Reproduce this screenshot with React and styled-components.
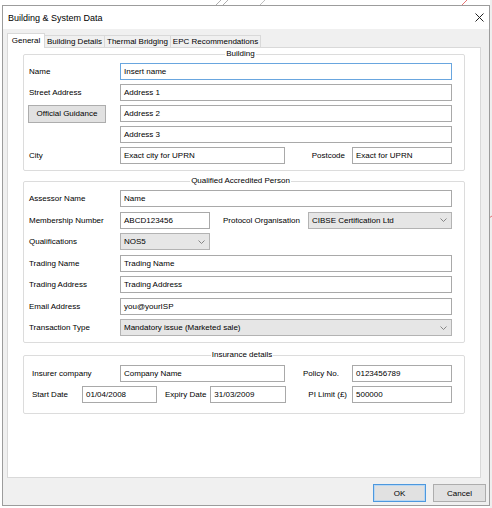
import React from "react";
import styled, { createGlobalStyle } from "styled-components";

const GlobalStyle = createGlobalStyle`
  html, body { margin: 0; padding: 0; background: #ffffff; }
  body {
    font-family: "Liberation Sans", Arial, sans-serif;
    font-size: 8px;
    color: #000;
  }
  * { box-sizing: border-box; }
`;

const Page = styled.div`
  position: relative;
  width: 492px;
  height: 508px;
  padding: 5px 0 0 2px;
  overflow: hidden;
`;

const Backdrop = styled.svg`
  position: absolute;
  left: 0;
  top: 0;
  width: 492px;
  height: 508px;
`;

const Window = styled.div`
  position: relative;
  width: 488px;
  height: 501px;
  border: 1px solid #9c9c9c;
  background: #f0f0f0;
  display: flex;
  flex-direction: column;
`;

const TitleBar = styled.div`
  height: 23px;
  flex: none;
  background: #ffffff;
  display: flex;
  align-items: center;
  justify-content: space-between;
  padding: 0 5px;
  font-size: 9px;
`;

const Body = styled.div`
  flex: 1;
  display: flex;
  flex-direction: column;
  padding: 4px 3px 3px 4px;
`;

const TabRow = styled.div`
  position: relative;
  z-index: 1;
  display: flex;
  align-items: flex-end;
  height: 15px;
  margin-bottom: -1px;
`;

const Tab = styled.div`
  width: ${(p) => p.$w}px;
  height: ${(p) => (p.$active ? 15 : 13)}px;
  margin-left: ${(p) => (p.$first ? 0 : -1)}px;
  border: 1px solid #d9d9d9;
  border-bottom: ${(p) => (p.$active ? "none" : "1px solid #d9d9d9")};
  background: ${(p) => (p.$active ? "#ffffff" : "#f0f0f0")};
  display: flex;
  align-items: center;
  justify-content: center;
  white-space: nowrap;
  padding-bottom: ${(p) => (p.$active ? 2 : 0)}px;
  position: relative;
  z-index: ${(p) => (p.$active ? 2 : 1)};
`;

const Panel = styled.div`
  width: 474px;
  height: 431px;
  flex: none;
  background: #ffffff;
  border: 1px solid #d9d9d9;
  padding: 0 15px;
`;

const Group = styled.fieldset`
  margin: ${(p) => p.$mt}px 0 0 0;
  min-width: 0;
  border: 1px solid #dcdcdc;
  border-radius: 2px;
  padding: ${(p) => p.$pt}px 12px ${(p) => p.$pb}px ${(p) => p.$pl}px;
  display: flex;
  flex-direction: column;
  gap: ${(p) => p.$gap}px;
`;

const Legend = styled.legend`
  margin: 0 auto;
  padding: 0 1px;
  font-size: 8px;
  line-height: 10px;
`;

const Row = styled.div`
  display: flex;
  align-items: center;
  height: 17px;
`;

const Label = styled.div`
  width: ${(p) => p.$w}px;
  flex: none;
  white-space: nowrap;
`;

const InlineLabel = styled.div`
  flex: none;
  white-space: nowrap;
  margin-left: ${(p) => p.$ml || 0}px;
  margin-right: ${(p) => p.$mr || 0}px;
`;

const Spacer = styled.div`
  flex: 1;
`;

const Field = styled.div`
  height: 17px;
  width: ${(p) => (p.$w ? `${p.$w}px` : "auto")};
  flex: ${(p) => (p.$w ? "none" : "1")};
  border: 1px solid ${(p) => (p.$focus ? "#69a6df" : "#a9a9a9")};
  background: #ffffff;
  display: flex;
  align-items: center;
  padding: 0 3px;
  white-space: nowrap;
  overflow: hidden;
`;

const Select = styled.div`
  height: 17px;
  width: ${(p) => (p.$w ? `${p.$w}px` : "auto")};
  flex: ${(p) => (p.$w ? "none" : "1")};
  border: 1px solid #b3b3b3;
  background: #e6e6e6;
  display: flex;
  align-items: center;
  justify-content: space-between;
  padding: 0 4px 0 3px;
  white-space: nowrap;
`;

const Chevron = () => (
  <svg width="7" height="4" viewBox="0 0 7 4">
    <polyline points="0.5,0.5 3.5,3.5 6.5,0.5" fill="none" stroke="#7a7a7a" strokeWidth="0.9" />
  </svg>
);

const GuidanceButton = styled.div`
  width: 78px;
  height: 18px;
  margin-left: -1px;
  margin-right: 14px;
  flex: none;
  background: #e1e1e1;
  border: 1px solid #adadad;
  display: flex;
  align-items: center;
  justify-content: center;
  white-space: nowrap;
`;

const Footer = styled.div`
  display: flex;
  justify-content: flex-end;
  gap: 7px;
  margin-top: 6px;
`;

const DialogButton = styled.div`
  width: 53px;
  height: 18px;
  background: #e1e1e1;
  border: 1px solid ${(p) => (p.$primary ? "#4d98de" : "#adadad")};
  box-shadow: ${(p) => (p.$primary ? "inset 0 0 0 1px #b9d7f2" : "none")};
  display: flex;
  align-items: center;
  justify-content: center;
`;

const CloseIcon = () => (
  <svg width="9" height="9" viewBox="0 0 9 9">
    <path d="M0.5 0.5 L8.5 8.5 M8.5 0.5 L0.5 8.5" stroke="#222" strokeWidth="1" fill="none" />
  </svg>
);

function TextRow({ label, value, focus, lw = 91 }) {
  return (
    <Row>
      <Label $w={lw}>{label}</Label>
      <Field $focus={focus}>{value}</Field>
    </Row>
  );
}

export default function App() {
  return (
    <>
      <GlobalStyle />
      <Page>
        <Backdrop viewBox="0 0 492 508">
          <line x1="216" y1="5" x2="221" y2="0" stroke="#9a9a9a" strokeWidth="0.8" />
          <line x1="223" y1="5" x2="228" y2="0" stroke="#9a9a9a" strokeWidth="0.8" />
          <line x1="260" y1="5" x2="265" y2="0" stroke="#b0b0b0" strokeWidth="0.8" />
          <line x1="462" y1="5" x2="467" y2="0" stroke="#e05050" strokeWidth="0.8" />
          <line x1="491" y1="0" x2="491" y2="508" stroke="#d6d6d6" strokeWidth="0.8" />
          <line x1="489" y1="218" x2="492" y2="216" stroke="#e05050" strokeWidth="0.8" />
        </Backdrop>
        <Window>
          <TitleBar>
            <span>Building &amp; System Data</span>
            <CloseIcon />
          </TitleBar>
          <Body>
            <TabRow>
              <Tab $w={38} $first $active>General</Tab>
              <Tab $w={61}>Building Details</Tab>
              <Tab $w={67}>Thermal Bridging</Tab>
              <Tab $w={91}>EPC Recommendations</Tab>
            </TabRow>
            <Panel>
              <Group $mt={1} $pt={4} $pb={6} $pl={5} $gap={4}>
                <Legend>Building</Legend>
                <TextRow label="Name" value="Insert name" focus />
                <TextRow label="Street Address" value="Address 1" />
                <Row>
                  <GuidanceButton>Official Guidance</GuidanceButton>
                  <Field>Address 2</Field>
                </Row>
                <TextRow label="" value="Address 3" />
                <Row>
                  <Label $w={91}>City</Label>
                  <Field $w={165}>Exact city for UPRN</Field>
                  <Spacer />
                  <InlineLabel $mr={7}>Postcode</InlineLabel>
                  <Field $w={100}>Exact for UPRN</Field>
                </Row>
              </Group>

              <Group $mt={5} $pt={4} $pb={6} $pl={5} $gap={4.5}>
                <Legend>Qualified Accredited Person</Legend>
                <TextRow label="Assessor Name" value="Name" />
                <Row>
                  <Label $w={91}>Membership Number</Label>
                  <Field $w={90}>ABCD123456</Field>
                  <InlineLabel $ml={13}>Protocol Organisation</InlineLabel>
                  <Spacer />
                  <Select $w={144}>
                    CIBSE Certification Ltd
                    <Chevron />
                  </Select>
                </Row>
                <Row>
                  <Label $w={91}>Qualifications</Label>
                  <Select $w={90}>
                    NOS5
                    <Chevron />
                  </Select>
                </Row>
                <TextRow label="Trading Name" value="Trading Name" />
                <TextRow label="Trading Address" value="Trading Address" />
                <TextRow label="Email Address" value="you@yourISP" />
                <Row>
                  <Label $w={91}>Transaction Type</Label>
                  <Select>
                    Mandatory issue (Marketed sale)
                    <Chevron />
                  </Select>
                </Row>
              </Group>

              <Group $mt={7} $pt={5} $pb={10} $pl={8} $gap={4}>
                <Legend>Insurance details</Legend>
                <Row>
                  <Label $w={88}>Insurer company</Label>
                  <Field $w={165}>Company Name</Field>
                  <Spacer />
                  <InlineLabel $mr={13}>Policy No.</InlineLabel>
                  <Field $w={100}>0123456789</Field>
                </Row>
                <Row>
                  <Label $w={50}>Start Date</Label>
                  <Field $w={75}>01/04/2008</Field>
                  <InlineLabel $ml={8} $mr={4}>Expiry Date</InlineLabel>
                  <Field $w={76}>31/03/2009</Field>
                  <Spacer />
                  <InlineLabel $mr={5}>PI Limit (£)</InlineLabel>
                  <Field $w={100}>500000</Field>
                </Row>
              </Group>
            </Panel>
            <Footer>
              <DialogButton $primary>OK</DialogButton>
              <DialogButton>Cancel</DialogButton>
            </Footer>
          </Body>
        </Window>
      </Page>
    </>
  );
}
